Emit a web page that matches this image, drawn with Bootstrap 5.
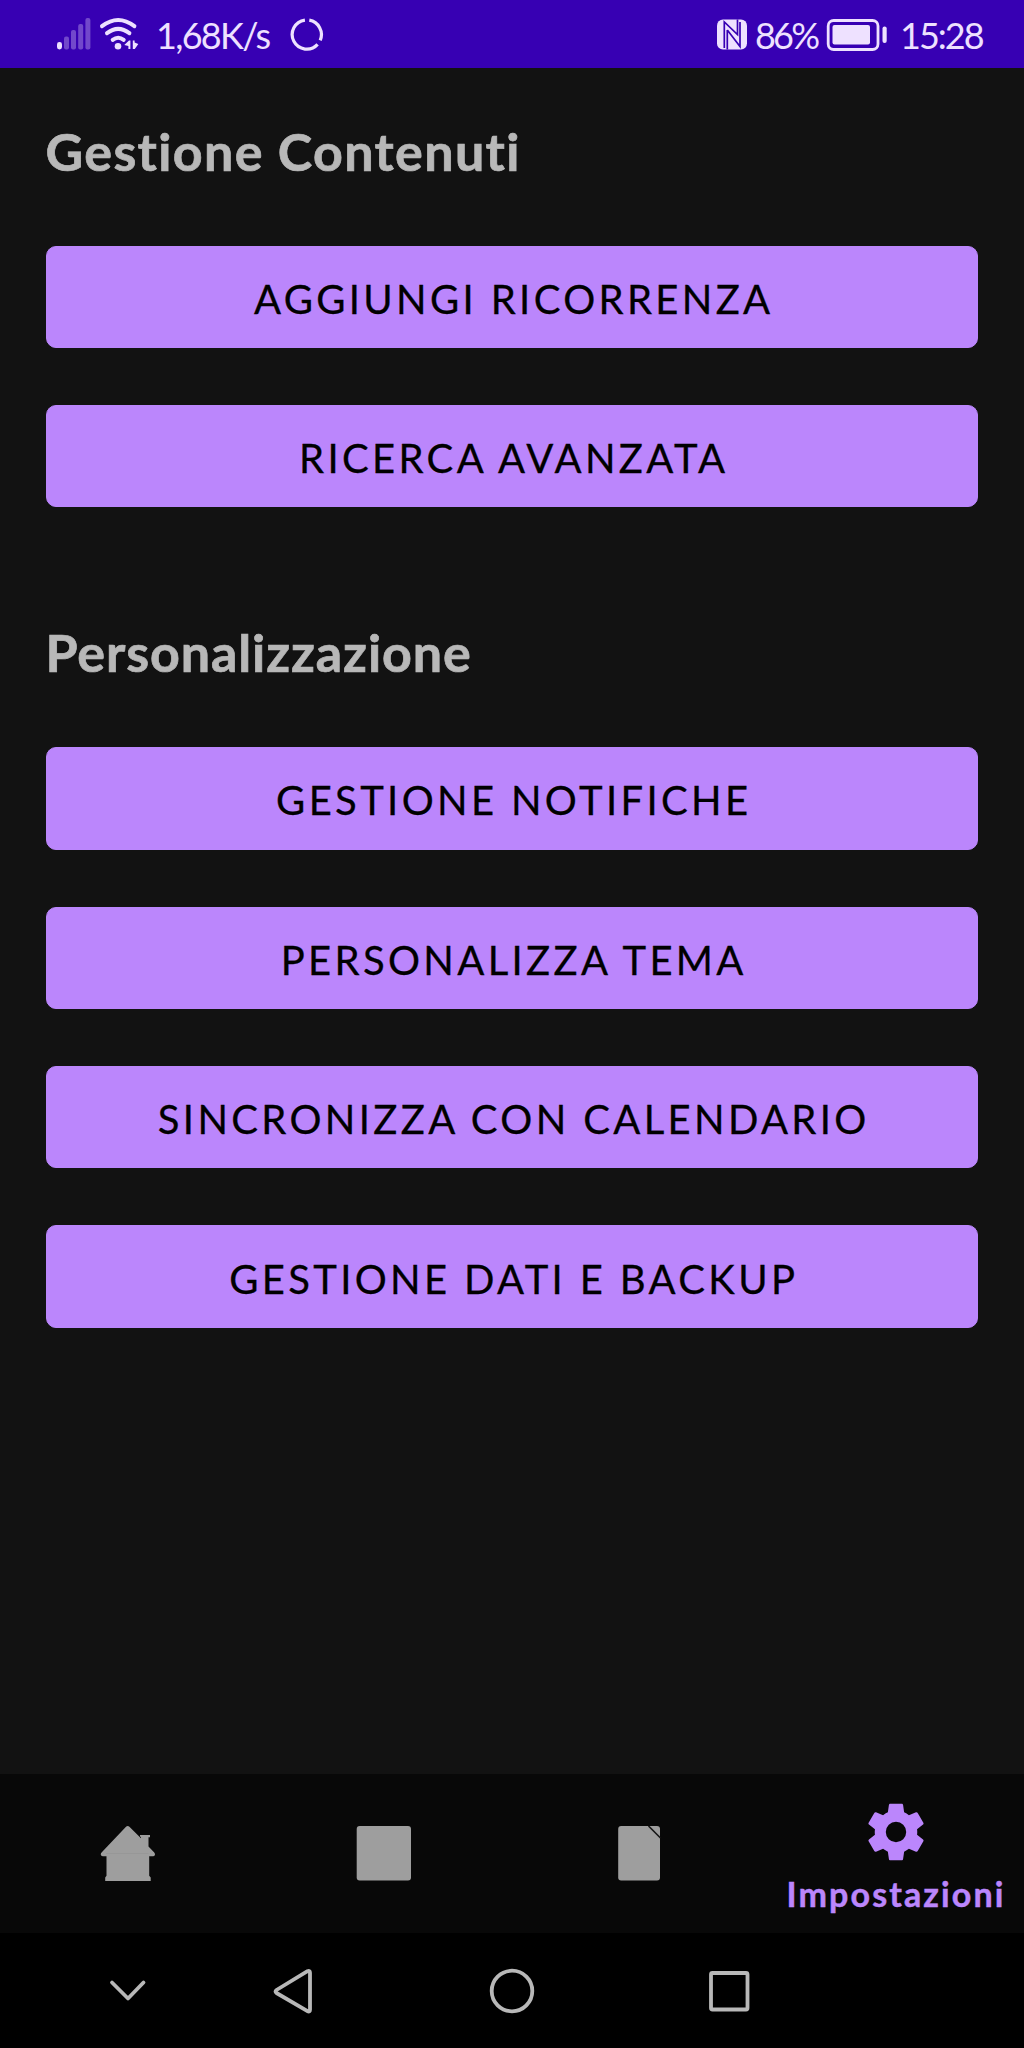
<!DOCTYPE html>
<html lang="it">
<head>
<meta charset="utf-8">
<meta name="viewport" content="width=device-width, initial-scale=1">
<title>Impostazioni</title>
<link rel="stylesheet" href="https://cdn.jsdelivr.net/npm/bootstrap@5.3.0/dist/css/bootstrap.min.css">
<style>
body{background:#121212;font-family:Lato,"Open Sans",sans-serif;font-variant-ligatures:none}
.screen{height:2048px;width:1024px;overflow:hidden}
svg{display:block;flex:none}
.status-bar{height:68px;background:#3700b3;color:#eee1ff;font-size:36px;line-height:70px;padding:0 39px 0 56px}
.net-speed{letter-spacing:-1.7px;margin:2px 0 0 16px;width:134px}
.battery-level{letter-spacing:-2.8px;margin:2px 0 0 8px;width:71px}
.clock{letter-spacing:-2px;margin:2px 0 0 12px;width:85px}
.section-title{font-size:52px;line-height:62px;font-weight:700;color:#b8b8b8;margin:0 0 64px 0;letter-spacing:1.35px;-webkit-text-stroke:.7px currentColor}
.title-tight{letter-spacing:.9px}
.content-area{padding:51.500px 46px 0 45.5px}
.btn-action{--bs-btn-bg:#bb86fc;--bs-btn-color:#000;--bs-btn-border-color:#bb86fc;height:102.4px;font-size:40px;line-height:1;border-radius:10px;padding:4px 0 0 4px;letter-spacing:3.35px;-webkit-text-stroke:.3px currentColor}
.btn-stack{gap:57px}
.group-gap{margin-top:114px}
.tab-bar{height:159px;background:#080808;color:#9e9e9e}
.tab-item{width:256px}
.tab-active{color:#bb86fc}
.tab-label{font-size:34px;font-weight:700;line-height:40px;letter-spacing:2.1px;margin-top:8px;-webkit-text-stroke:.5px currentColor}
.system-bar{height:115px;background:#000;padding-left:108px}
</style>
</head>
<body>
<div class="screen d-flex flex-column">
  <header class="status-bar d-flex align-items-center">
    <svg width="84" height="68" viewBox="56 0 84 68" fill="currentColor">
      <rect x="57" y="42" width="5" height="7.5" rx="2.4"/>
      <g opacity=".32"><rect x="64" y="36.5" width="5" height="13" rx="2"/><rect x="71" y="30" width="5" height="19.5" rx="2"/><rect x="78.200" y="24" width="5" height="25.500" rx="2"/><rect x="85.400" y="18" width="5" height="31.500" rx="2"/></g>
      <g fill="none" stroke="currentColor" stroke-width="4" stroke-linecap="round"><path d="M102 26.200Q118.200 13.800 134.400 26.200"/><path d="M107 33.200Q118.200 24.600 129.400 33.200"/><path d="M112.700 39.800Q118.200 35.600 123.700 39.800"/></g>
      <circle cx="118" cy="46.200" r="3.300"/>
      <path d="M124.300 45 129 40.500h1.400v8.500h-2v-3zM132.800 40.500h1.800v2l3.700 1.500-3.500 5h-2z"/>
    </svg>
    <span class="net-speed">1,68K/s</span>
    <svg width="34" height="68" viewBox="290 0 34 68" fill="none" stroke="currentColor" stroke-width="3.200">
      <path d="M309.300 20.200A14.600 14.600 0 0 1 320.200 40.400M317.600 44.400A14.600 14.600 0 1 1 304.900 20.100"/>
    </svg>
    <svg class="ms-auto" width="32" height="68" viewBox="715 0 32 68">
      <rect x="717" y="19.500" width="30" height="30" rx="6" fill="currentColor"/>
      <path d="M724.300 48V22L737.500 34.500V28M727.300 30V49.500M727.300 30 740 46.500V22M737.500 19.500V28" fill="none" stroke="#3700b3" stroke-width="1.700"/>
    </svg>
    <span class="battery-level">86%</span>
    <svg width="62" height="68" viewBox="826 0 62 68" fill="currentColor">
      <rect x="828.200" y="20.500" width="49.800" height="29" rx="5.500" fill="none" stroke="currentColor" stroke-width="2.800"/>
      <rect x="832.500" y="25" width="37.500" height="19.500" rx="2"/><rect x="882.500" y="26.500" width="4.200" height="16.500" rx="2"/>
    </svg>
    <span class="clock">15:28</span>
  </header>

  <main class="content-area flex-grow-1">
    <h2 class="section-title">Gestione Contenuti</h2>
    <div class="btn-stack d-flex flex-column">
      <button type="button" class="btn btn-action w-100">AGGIUNGI RICORRENZA</button>
      <button type="button" class="btn btn-action w-100">RICERCA AVANZATA</button>
    </div>
    <h2 class="section-title title-tight group-gap">Personalizzazione</h2>
    <div class="btn-stack d-flex flex-column">
      <button type="button" class="btn btn-action w-100">GESTIONE NOTIFICHE</button>
      <button type="button" class="btn btn-action w-100">PERSONALIZZA TEMA</button>
      <button type="button" class="btn btn-action w-100">SINCRONIZZA CON CALENDARIO</button>
      <button type="button" class="btn btn-action w-100">GESTIONE DATI E BACKUP</button>
    </div>
  </main>

  <nav class="tab-bar d-flex flex-shrink-0">
    <div class="tab-item d-flex justify-content-center align-items-center">
      <svg width="56" height="56" viewBox="100 1826 56 56" fill="currentColor">
        <path d="M126 1826.800q1.700-1.400 3.400 0L141 1838.200v-1.500h-1V1835h10v2.200h-1.500v9.300l5.500 5.700q1.400 1.600.8 3-.7 1.300-2.300 1h-3.300v19.600l1.500 1.700v3.500h-45.500v-3.500l1.300-1.700v-19.600h-3q-1.800.2-2.500-1-.7-1.600.8-3z"/>
        <path d="M106 1853.500h42.500" stroke="#959595" stroke-width=".8"/>
      </svg>
    </div>
    <div class="tab-item d-flex justify-content-center align-items-center">
      <svg width="56" height="56" viewBox="356 1826 56 56" fill="currentColor"><rect x="356.700" y="1826" width="54.300" height="54.600" rx="3"/></svg>
    </div>
    <div class="tab-item d-flex justify-content-center align-items-center">
      <svg width="44" height="56" viewBox="618 1826 44 56" fill="currentColor"><rect x="618.200" y="1826" width="41.800" height="54.600" rx="3"/><path d="M648.500 1826 660.500 1838" stroke="#151515" stroke-width="1.600"/></svg>
    </div>
    <div class="tab-item tab-active d-flex flex-column align-items-center">
      <svg class="mt-4" width="68" height="68" viewBox="0 0 24 24" fill="currentColor"><path d="M19.430 12.980c.04-.32.07-.64.07-.98s-.03-.66-.07-.98l2.110-1.650c.19-.15.24-.42.120-.64l-2-3.460c-.12-.22-.39-.3-.61-.22l-2.490 1c-.52-.4-1.080-.73-1.690-.98l-.38-2.650C14.460 2.180 14.250 2 14 2h-4c-.25 0-.46.18-.49.42l-.38 2.650c-.61.25-1.170.59-1.690.98l-2.490-1c-.23-.09-.49 0-.61.22l-2 3.460c-.13.22-.07.49.12.64l2.110 1.650c-.04.32-.07.65-.07.98s.03.66.07.98l-2.110 1.650c-.19.15-.24.42-.12.64l2 3.460c.12.22.39.3.61.22l2.490-1c.52.4 1.080.73 1.690.98l.38 2.650c.03.24.24.42.49.42h4c.25 0 .46-.18.49-.42l.38-2.650c.61-.25 1.170-.59 1.690-.98l2.490 1c.23.09.49 0 .61-.22l2-3.460c.12-.22.07-.49-.12-.64l-2.110-1.650zM12 15.600a3.600 3.600 0 1 1 0-7.200 3.600 3.600 0 0 1 0 7.200z"/></svg>
      <span class="tab-label">Impostazioni</span>
    </div>
  </nav>

  <footer class="system-bar d-flex align-items-center flex-shrink-0">
    <svg width="650" height="60" viewBox="108 1961 650 60" fill="none" stroke="#b8b8b8" stroke-width="3.800" stroke-linecap="round" stroke-linejoin="round">
      <path d="M112 1982.500 128 1998.500 143.500 1982.500"/>
      <path d="M307.500 1971.200q2.500-1 2.500 1.500v37q0 2.500-2.500 1.500L276.500 1993q-2-1.500 0-3z"/>
      <circle cx="512" cy="1991" r="20.300"/>
      <rect x="711" y="1973" width="36.500" height="36.500" rx="1.500"/>
    </svg>
  </footer>
</div>
<script src="https://cdn.jsdelivr.net/npm/bootstrap@5.3.0/dist/js/bootstrap.bundle.min.js"></script>
</body>
</html>
